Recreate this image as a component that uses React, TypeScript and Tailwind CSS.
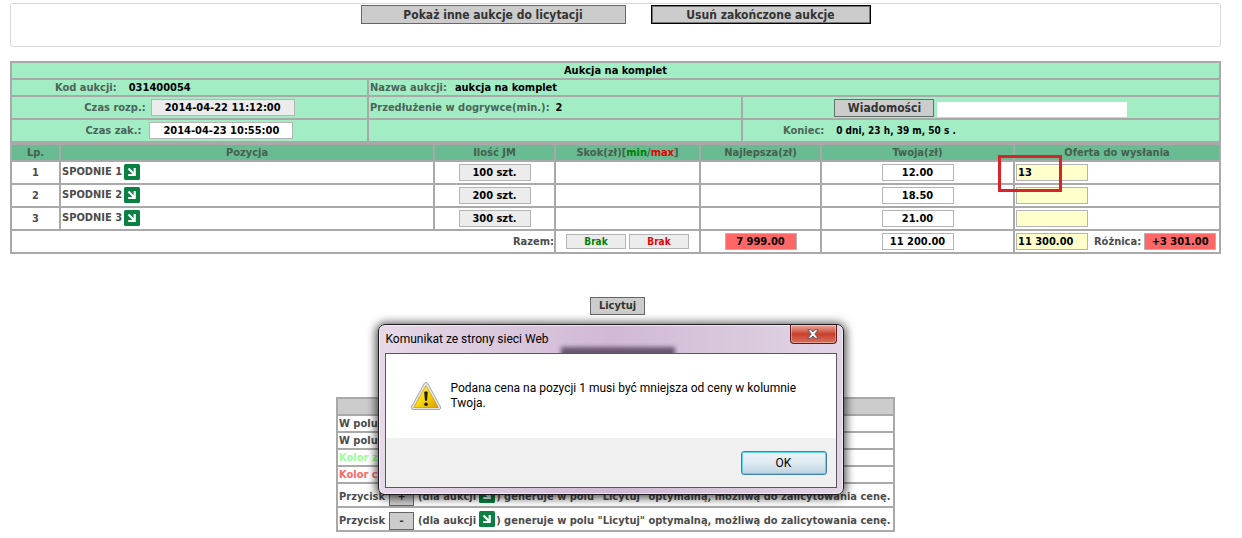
import { useState, type ReactNode } from "react";
import { clsx } from "clsx";

const cell = "border-2 border-[#a9a9a9] p-0";
const field =
  "h-[17px] border border-[#b4b4b4] px-1 text-[11px] leading-[15px] font-bold text-black outline-none";
const label = "text-[#4b6457]";

function ArrowIcon({ className }: { className?: string }) {
  return (
    <svg viewBox="0 0 16 16" className={clsx("inline-block size-4 shrink-0", className)} aria-hidden="true">
      <rect width="16" height="16" rx="1.5" fill="#0b8043" />
      <path d="M4.5 4.5 L10.5 10.5" stroke="#fff" strokeWidth="2.2" />
      <path d="M10.7 4 V11 H4.2" fill="none" stroke="#fff" strokeWidth="2.2" />
    </svg>
  );
}

function WarningIcon() {
  return (
    <svg viewBox="0 0 32 30" className="h-[30px] w-8 shrink-0" aria-hidden="true">
      <defs>
        <linearGradient id="warn" x1="0" y1="0" x2="1" y2="1">
          <stop offset="0" stopColor="#fff27a" />
          <stop offset="0.5" stopColor="#fbd90c" />
          <stop offset="1" stopColor="#d99a00" />
        </linearGradient>
      </defs>
      <path
        d="M16 1.5 Q17.3 1.5 18 2.9 L30.6 26 Q31.2 28.3 29 28.5 H3 Q0.8 28.3 1.4 26 L14 2.9 Q14.7 1.5 16 1.5Z"
        fill="#e4e4e4"
        stroke="#a9a9a9"
        strokeWidth="1"
      />
      <path d="M16 4.5 L28.3 26.5 H3.7 Z" fill="url(#warn)" stroke="#b98e00" strokeWidth="0.6" strokeLinejoin="round" />
      <path d="M14.2 11 Q16 9.6 17.8 11 L17 19.8 H15 Z" fill="#1c1c10" />
      <circle cx="16" cy="23.2" r="1.8" fill="#1c1c10" />
    </svg>
  );
}

function CloseIcon() {
  return (
    <svg viewBox="0 0 12 10" className="h-[10px] w-3" aria-hidden="true">
      <path
        d="M0.8 0.8 H4 L6 3 L8 0.8 H11.2 L7.8 5 L11.2 9.2 H8 L6 7 L4 9.2 H0.8 L4.2 5 Z"
        fill="#fff"
        stroke="#4f4f63"
        strokeWidth="0.9"
        strokeLinejoin="round"
      />
    </svg>
  );
}

function GreyButton({ className, children }: { className?: string; children: ReactNode }) {
  return (
    <button
      type="button"
      className={clsx("border bg-[#cccccc] text-center font-bold text-[#333333]", className)}
    >
      {children}
    </button>
  );
}

const items = [
  { no: 1, name: "SPODNIE 1", qty: "100 szt.", mine: "12.00", offer: "13" },
  { no: 2, name: "SPODNIE 2", qty: "200 szt.", mine: "18.50", offer: "" },
  { no: 3, name: "SPODNIE 3", qty: "300 szt.", mine: "21.00", offer: "" },
];

function AuctionHeader() {
  return (
    <table className="w-full table-fixed border-collapse bg-[#a3edc5]">
      <colgroup>
        <col className="w-[357px]" />
        <col />
        <col className="w-[478px]" />
      </colgroup>
      <tbody>
        <tr className="h-[17px]">
          <th colSpan={3} className={clsx(cell, "text-center text-black")}>Aukcja na komplet</th>
        </tr>
        <tr className="h-[17px]">
          <td className={cell}>
            <div className="flex gap-3 pl-[43px]">
              <span className={label}>Kod aukcji:</span>
              <span className="text-black">031400054</span>
            </div>
          </td>
          <td colSpan={2} className={cell}>
            <div className="flex gap-2 pl-px">
              <span className={label}>Nazwa aukcji:</span>
              <span className="text-black">aukcja na komplet</span>
            </div>
          </td>
        </tr>
        <tr className="h-[23px]">
          <td className={cell}>
            <div className="flex items-center justify-center gap-[5px]">
              <label htmlFor="start" className={label}>Czas rozp.:</label>
              <input id="start" readOnly defaultValue="2014-04-22 11:12:00" className={clsx(field, "w-36 bg-[#ececec] text-center")} />
            </div>
          </td>
          <td className={cell}>
            <div className="flex gap-[6px] pl-px">
              <span className={label}>Przedłużenie w dogrywce(min.):</span>
              <span className="text-black">2</span>
            </div>
          </td>
          <td className={cell}>
            <div className="flex items-center justify-center gap-[3px]">
              <GreyButton className="h-[18px] w-[100px] border-[#5f7468] text-xs leading-4">Wiadomości</GreyButton>
              <input aria-label="Wiadomości" readOnly className="mt-1 h-[15px] w-[190px] bg-white" />
            </div>
          </td>
        </tr>
        <tr className="h-[23px]">
          <td className={cell}>
            <div className="flex items-center justify-center gap-2">
              <label htmlFor="end" className={label}>Czas zak.:</label>
              <input id="end" readOnly defaultValue="2014-04-23 10:55:00" className={clsx(field, "w-36 bg-white text-center")} />
            </div>
          </td>
          <td className={cell} />
          <td className={cell}>
            <div className="flex items-center gap-3 pl-10">
              <span className={label}>Koniec:</span>
              <span className="text-[10px] text-black">0 dni, 23 h, 39 m, 50 s .</span>
            </div>
          </td>
        </tr>
      </tbody>
    </table>
  );
}

function ItemsTable() {
  return (
    <table className="w-full table-fixed border-collapse">
      <colgroup>
        <col className="w-[49px]" />
        <col />
        <col className="w-[121px]" />
        <col className="w-[145px]" />
        <col className="w-[121px]" />
        <col className="w-[193px]" />
        <col className="w-[206px]" />
      </colgroup>
      <thead>
        <tr className="h-[17px] bg-[#69bb91] text-[#46604f]">
          <th className={cell}>Lp.</th>
          <th className={cell}>Pozycja</th>
          <th className={cell}>Ilość JM</th>
          <th className={cell}>
            Skok(zł)[<span className="text-[#008000]">min</span>/<span className="text-[#e60000]">max</span>]
          </th>
          <th className={cell}>Najlepsza(zł)</th>
          <th className={cell}>Twoja(zł)</th>
          <th className={cell}>Oferta do wysłania</th>
        </tr>
      </thead>
      <tbody>
        {items.map((item) => (
          <tr key={item.no} className="h-[23px]">
            <td className={clsx(cell, "text-center")}>{item.no}</td>
            <td className={cell}>
              <div className="flex items-start gap-[2px] pb-px pl-px">
                {item.name}
                <ArrowIcon />
              </div>
            </td>
            <td className={cell}>
              <input aria-label={`Ilość ${item.name}`} readOnly defaultValue={item.qty} className={clsx(field, "mx-auto block w-[72px] bg-[#ececec] text-center")} />
            </td>
            <td className={cell} />
            <td className={cell} />
            <td className={cell}>
              <input aria-label={`Twoja ${item.name}`} readOnly defaultValue={item.mine} className={clsx(field, "mx-auto block w-[72px] bg-white text-center")} />
            </td>
            <td className={cell}>
              <div className="relative pl-px">
                <input aria-label={`Oferta ${item.name}`} defaultValue={item.offer} className={clsx(field, "block w-[72px] bg-[#ffffcc] px-px")} />
                {item.no === 1 && (
                  <div className="pointer-events-none absolute -top-[9px] -left-[17px] z-10 h-[37px] w-16 border-[3px] border-[#d9222a]" />
                )}
              </div>
            </td>
          </tr>
        ))}
        <tr className="h-[23px]">
          <td colSpan={3} className={clsx(cell, "text-right")}>Razem:</td>
          <td className={cell}>
            <div className="flex justify-center gap-[3px]">
              <input aria-label="Skok min" readOnly defaultValue="Brak" className="h-[15px] w-[60px] border border-[#b4b4b4] bg-[#ececec] text-center text-[10px] font-bold text-[#008000]" />
              <input aria-label="Skok max" readOnly defaultValue="Brak" className="h-[15px] w-[60px] border border-[#b4b4b4] bg-[#ececec] text-center text-[10px] font-bold text-[#e60000]" />
            </div>
          </td>
          <td className={cell}>
            <input aria-label="Najlepsza razem" readOnly defaultValue="7 999.00" className={clsx(field, "mx-auto block w-[72px] bg-[#ff6666] text-center")} />
          </td>
          <td className={cell}>
            <input aria-label="Twoja razem" readOnly defaultValue="11 200.00" className={clsx(field, "mx-auto block w-[72px] bg-white text-center")} />
          </td>
          <td className={cell}>
            <div className="flex items-center pl-px">
              <input aria-label="Oferta razem" readOnly defaultValue="11 300.00" className={clsx(field, "w-[72px] bg-[#ffffcc] px-px")} />
              <label htmlFor="diff" className="ml-[6px]">Różnica:</label>
              <input id="diff" readOnly defaultValue="+3 301.00" className={clsx(field, "ml-[3px] w-[72px] bg-[#ff6666] text-center")} />
            </div>
          </td>
        </tr>
      </tbody>
    </table>
  );
}

function Legend() {
  return (
    <table className="mx-auto mt-[82px] w-[559px] table-fixed border-collapse">
      <tbody>
        <tr className="h-[17px] bg-[#cccccc]">
          <td className={cell} />
        </tr>
        <tr className="h-[17px]"><td className={clsx(cell, "pl-px")}>W polu</td></tr>
        <tr className="h-[17px]"><td className={clsx(cell, "pl-px")}>W polu</td></tr>
        <tr className="h-[17px] text-[#99ff99]"><td className={clsx(cell, "pl-px")}>Kolor z</td></tr>
        <tr className="h-[17px] text-[#ff6666]"><td className={clsx(cell, "pl-px")}>Kolor c</td></tr>
        {["+", "-"].map((sign) => (
          <tr key={sign} className="h-6">
            <td className={cell}>
              <div className="flex items-center pt-[3px] pl-px whitespace-nowrap">
                Przycisk
                <GreyButton className="mx-1 h-[18px] w-[25px] border-[#666666] text-[11px] leading-[14px]">{sign}</GreyButton>
                (dla aukcji
                <ArrowIcon className="mr-px mb-[3px] ml-[3px]" />
                ) generuje w polu "Licytuj" optymalną, możliwą do zalicytowania cenę.
              </div>
            </td>
          </tr>
        ))}
      </tbody>
    </table>
  );
}

function MessageDialog({ onClose }: { onClose: () => void }) {
  return (
    <div
      role="alertdialog"
      aria-labelledby="dialog-title"
      className="absolute top-[70px] left-[calc(50%-238px)] flex h-[171px] w-[466px] flex-col rounded-[7px] border border-[#1e1a20] bg-linear-to-r from-[#e6d9e8] via-[#d0b9d4] to-[#e2d5e5] px-[6px] pb-[6px] font-['Roboto',sans-serif] text-xs font-normal text-black shadow-[0_1px_10px_2px_rgba(0,0,0,0.7),inset_0_0_0_1px_rgba(255,255,255,0.6)]"
    >
      <div className="relative flex h-7 shrink-0 items-start justify-between overflow-hidden">
        <div className="absolute top-[22px] left-[176px] h-3 w-[114px] bg-[#6a5670] blur-[2px]" />
        <h2 id="dialog-title" className="pt-[6px] pl-px leading-4">Komunikat ze strony sieci Web</h2>
        <button
          type="button"
          aria-label="Zamknij"
          onClick={onClose}
          className="flex h-[19px] w-[47px] items-center justify-center rounded-b-[4px] border border-t-0 border-[#5a2020] bg-linear-to-b from-[#e9a79b] via-[#c93e2a] via-50% to-[#d9705c] shadow-[inset_0_0_0_1px_rgba(255,255,255,0.35)]"
        >
          <CloseIcon />
        </button>
      </div>
      <div className="flex min-h-0 flex-1 flex-col border border-[#5c5560] bg-white">
        <div className="flex flex-1 gap-[9px] pt-[27px] pl-6">
          <WarningIcon />
          <p className="w-[360px] leading-[15px]">
            Podana cena na pozycji 1 musi być mniejsza od ceny w kolumnie Twoja.
          </p>
        </div>
        <div className="flex h-[49px] justify-end bg-[#f0f0f0] pt-[13px] pr-[9px]">
          <button
            type="button"
            onClick={onClose}
            className="h-6 w-[86px] rounded-[3px] border border-[#3c7fb1] bg-linear-to-b from-[#eef4f8] via-[#dfe9f0] via-50% to-[#bcd3e0] leading-5 shadow-[inset_0_0_0_1px_#5fd3f0]"
          >
            OK
          </button>
        </div>
      </div>
    </div>
  );
}

export default function App() {
  const [open, setOpen] = useState(true);
  return (
    <div className="bg-white pt-[3px] pr-[21px] pb-[6px] pl-[10px] font-['DejaVu_Sans_Condensed','DejaVu_Sans',sans-serif] text-[11px] leading-[15px] font-bold text-[#4c4c4c]">
      <div className="mb-[14px] flex h-11 items-start justify-center gap-[25px] rounded-[3px] border border-[#d9d9d9] pt-px">
        <GreyButton className="h-[19px] w-[265px] border-[#666666] text-xs leading-4">Pokaż inne aukcje do licytacji</GreyButton>
        <GreyButton className="h-[19px] w-[220px] border-black text-xs leading-4 shadow-[inset_0_0_0_1px_#777777]">Usuń zakończone aukcje</GreyButton>
      </div>
      <AuctionHeader />
      <ItemsTable />
      <div className="relative">
        <div className="flex justify-center pt-[43px] pl-1">
          <GreyButton className="h-[18px] w-[55px] border-[#666666] text-[11px] leading-4">Licytuj</GreyButton>
        </div>
        <Legend />
        {open && <MessageDialog onClose={() => setOpen(false)} />}
      </div>
    </div>
  );
}
